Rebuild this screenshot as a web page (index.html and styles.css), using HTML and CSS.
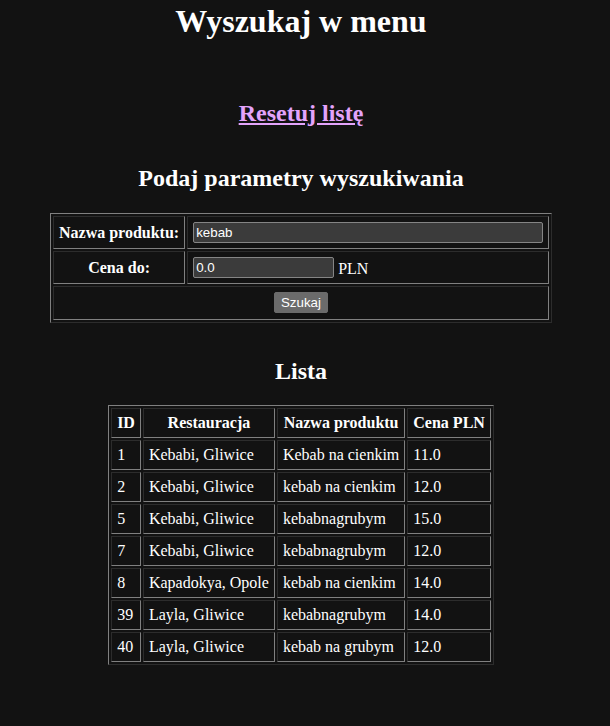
FILE: index.html
```html
<!DOCTYPE html>
<html lang="pl">
<head>
<meta charset="utf-8">
<title>Wyszukaj w menu</title>
<link rel="stylesheet" href="styles.css">
</head>
<body>
<div class="page">
  <h1 class="title">Wyszukaj w menu</h1>
  <h2 class="reset"><a href="#" class="reset-link">Resetuj listę</a></h2>
  <h2 class="params">Podaj parametry wyszukiwania</h2>
  <form class="search-form" onsubmit="return false;">
    <table class="grid search-table">
      <tr>
        <th class="label">Nazwa produktu:</th>
        <td class="field"><input type="text" class="text-input wide" value="kebab"></td>
      </tr>
      <tr>
        <th class="label">Cena do:</th>
        <td class="field"><input type="text" class="text-input narrow" value="0.0"> PLN</td>
      </tr>
      <tr>
        <td class="submit-cell" colspan="2"><button type="submit" class="btn">Szukaj</button></td>
      </tr>
    </table>
  </form>
  <h2 class="list-title">Lista</h2>
  <table class="grid list-table">
    <tr><th>ID</th><th>Restauracja</th><th>Nazwa produktu</th><th>Cena PLN</th></tr>
    <tr><td>1</td><td>Kebabi, Gliwice</td><td>Kebab na cienkim</td><td>11.0</td></tr>
    <tr><td>2</td><td>Kebabi, Gliwice</td><td>kebab na cienkim</td><td>12.0</td></tr>
    <tr><td>5</td><td>Kebabi, Gliwice</td><td>kebabnagrubym</td><td>15.0</td></tr>
    <tr><td>7</td><td>Kebabi, Gliwice</td><td>kebabnagrubym</td><td>12.0</td></tr>
    <tr><td>8</td><td>Kapadokya, Opole</td><td>kebab na cienkim</td><td>14.0</td></tr>
    <tr><td>39</td><td>Layla, Gliwice</td><td>kebabnagrubym</td><td>14.0</td></tr>
    <tr><td>40</td><td>Layla, Gliwice</td><td>kebab na grubym</td><td>12.0</td></tr>
  </table>
</div>
</body>
</html>
```
FILE: styles.css
```css
:root {
  color-scheme: dark;
}
html, body {
  background: #121212;
}
body {
  margin: 0;
  color: #ffffff;
  font-family: "Liberation Serif", "Times New Roman", serif;
  font-size: 16px;
}
.page {
  width: 602px;
  text-align: center;
}
.title {
  margin: 3px 0 0;
  font-size: 32px;
  font-weight: bold;
  line-height: normal;
}
.reset {
  margin: 60px 0 0;
  font-size: 24px;
  line-height: normal;
}
.reset-link {
  color: #e3a3fb;
  text-decoration: underline;
}
.params {
  margin: 37.6px 0 21.6px;
  font-size: 24px;
  line-height: normal;
}
.search-form {
  margin: 0;
}
.grid {
  margin: 0 auto;
  border-collapse: separate;
  border-spacing: 2px;
  border: 1px outset #808080;
}
.grid th, .grid td {
  border: 1px inset #808080;
  padding: 5px;
}
.grid th {
  font-weight: bold;
  text-align: center;
}
.grid td {
  text-align: left;
}
.search-table {
  width: 502px;
}
.search-table th, .search-table td {
  height: 21px;
  padding: 5px;
}
.search-table .label {
  width: 117px;
  white-space: nowrap;
}
.text-input {
  box-sizing: border-box;
  height: 21px;
  margin: 0;
  padding: 1px 2px;
  font-family: "Liberation Sans", Arial, sans-serif;
  font-size: 13.333px;
  color: #ffffff;
  background: #3b3b3b;
  border: 1px solid #858585;
  border-radius: 2px;
  vertical-align: bottom;
}
.wide {
  width: 100%;
}
.narrow {
  width: 141px;
}
.search-table .submit-cell {
  text-align: center;
  padding: 5px 5px 6px;
}
.btn {
  margin: 0;
  height: 21px;
  padding: 1px 6px;
  font-family: "Liberation Sans", Arial, sans-serif;
  font-size: 13.333px;
  color: #ffffff;
  background: #6b6b6b;
  border: 1px solid #6b6b6b;
  border-radius: 2px;
  vertical-align: middle;
}
.list-title {
  margin: 34.8px 0 19.9px;
  font-size: 24px;
  line-height: normal;
}
.list-table td, .list-table th {
  white-space: nowrap;
}
```
